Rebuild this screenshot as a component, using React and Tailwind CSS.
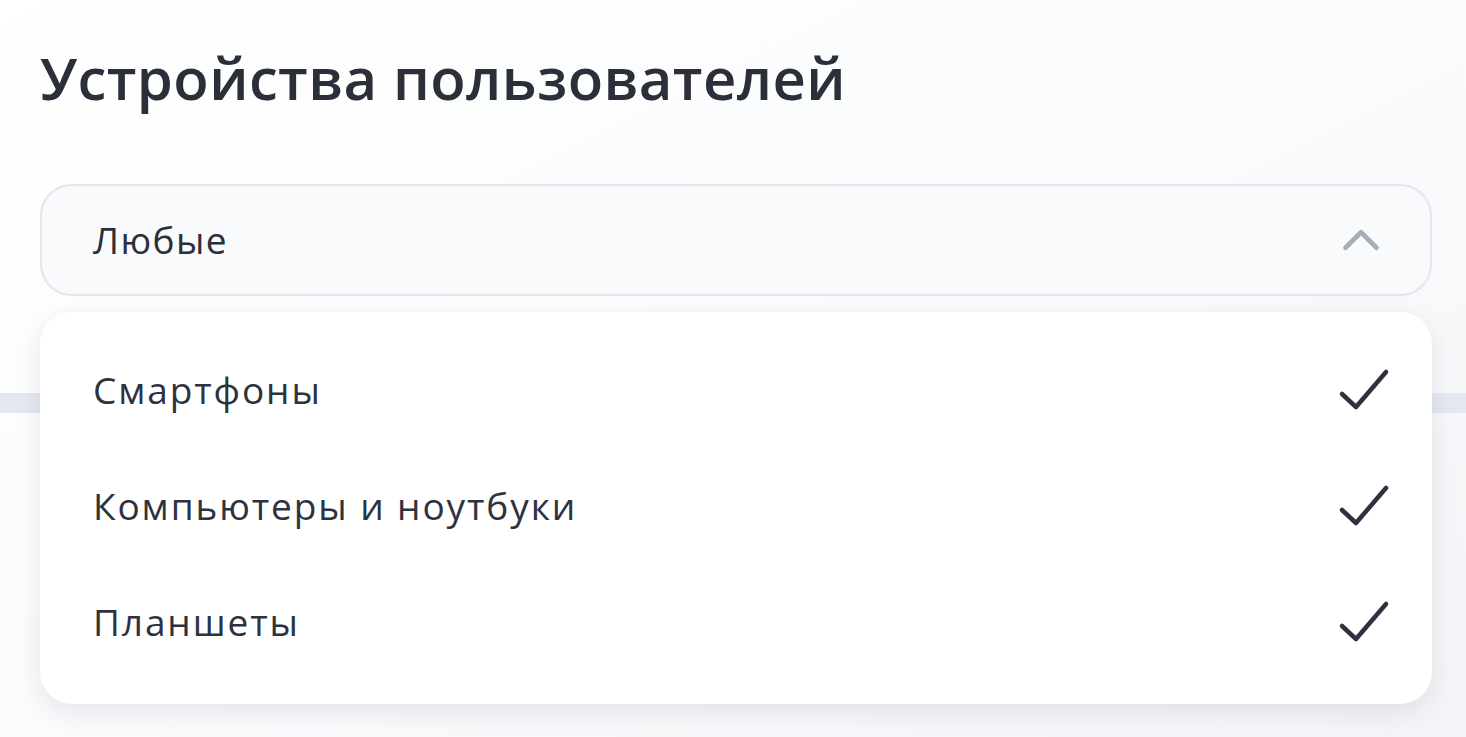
import { ChevronUp } from 'lucide-react';

const options = ['Смартфоны', 'Компьютеры и ноутбуки', 'Планшеты'];

const CheckIcon = () => (
  <svg width="52" height="48" viewBox="0 0 52 48" fill="none" className="shrink-0">
    <path d="M4 28 L18 41 L48 6" stroke="#2d323e" strokeWidth="4.5" strokeLinecap="round" strokeLinejoin="round" />
  </svg>
);

const App = () => {
  return (
    <div
      className="relative h-[737px] w-full overflow-hidden bg-gradient-to-br from-white via-[#fafbfc] to-[#f3f4f7] text-[#2d323e]"
      style={{ fontFamily: '"Open Sans", "Noto Sans", sans-serif' }}
    >
      {/* Header */}
      <div className="px-[40px] pt-[38px]">
        <h1 className="text-[58px] font-semibold leading-[80px] tracking-[0.4px] text-[#2b2f3a]">
          Устройства пользователей
        </h1>
      </div>

      {/* Select */}
      <div className="relative mt-[66px] pl-[40px] pr-[34px]">
        <div className="flex h-[112px] items-center justify-between rounded-[32px] border-2 border-[#e3e6ee] bg-[#f9fafc] pl-[51px] pr-[38px]">
          <span className="text-[37px] tracking-[1.4px] text-[#2b2f3a]">Любые</span>
          <ChevronUp size={62} strokeWidth={1.8} className="text-[#a7aebb]" />
        </div>

        {/* Dropdown menu */}
        <div className="absolute left-[40px] right-[34px] top-[128px] z-10 rounded-[32px] bg-white pt-[20px] pb-[24px] shadow-[0_8px_24px_rgba(40,50,80,0.10)]">
          {options.map((opt) => (
            <div key={opt} className="flex h-[116px] items-center justify-between pl-[53px] pr-[42px]">
              <span className="text-[37px] tracking-[1.9px] text-[#2d323e]">{opt}</span>
              <CheckIcon />
            </div>
          ))}
        </div>
      </div>

      {/* Content behind the menu */}
      <div className="mt-[97px] h-[20px] w-full bg-[#e4e8f0]" />
    </div>
  );
};

export default App;
